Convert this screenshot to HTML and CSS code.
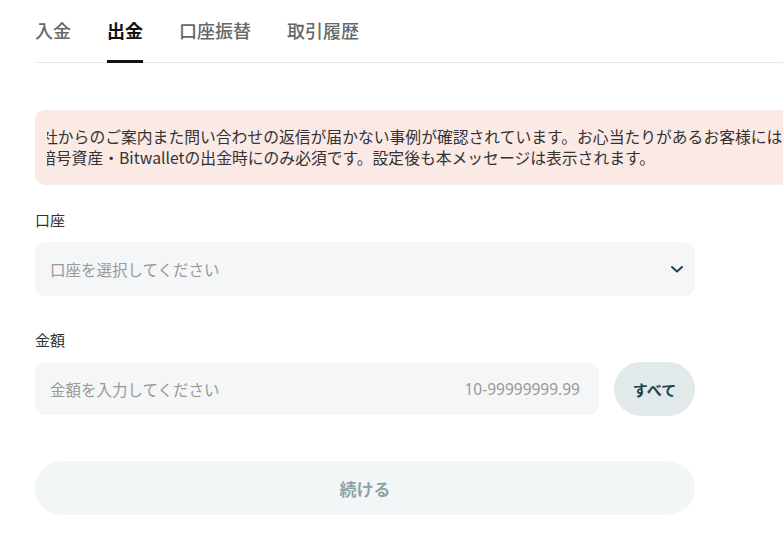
FILE: index.html
```html
<!DOCTYPE html>
<html lang="ja">
<head>
    <meta charset="UTF-8">
    <meta name="viewport" content="width=device-width, initial-scale=1.0">
    <title>出金</title>
    <link rel="stylesheet" href="styles.css">
</head>
<body>
    <div class="page">
        <nav class="tabs">
            <a class="tab">入金</a>
            <a class="tab active">出金</a>
            <a class="tab">口座振替</a>
            <a class="tab">取引履歴</a>
        </nav>

        <div class="notice">
            <div class="notice-track">
                <p class="line-1">社からのご案内また問い合わせの返信が届かない事例が確認されています。お心当たりがあるお客様には</p>
                <p class="line-2">暗号資産・Bitwalletの出金時にのみ必須です。設定後も本メッセージは表示されます。</p>
            </div>
        </div>

        <form class="withdraw-form">
            <div class="field">
                <label class="field-label">口座</label>
                <div class="select">
                    <span class="placeholder">口座を選択してください</span>
                    <svg class="chevron" width="14" height="14" viewBox="0 0 14 14">
                        <path d="M2 5 L7 9.6 L12 5" fill="none" stroke="#1f4650" stroke-width="2" stroke-linecap="round" stroke-linejoin="round"/>
                    </svg>
                </div>
            </div>

            <div class="field">
                <label class="field-label">金額</label>
                <div class="amount-row">
                    <div class="input">
                        <span class="placeholder">金額を入力してください</span>
                        <span class="range">10-99999999.99</span>
                    </div>
                    <button type="button" class="all-btn">すべて</button>
                </div>
            </div>

            <button type="button" class="submit" disabled>続ける</button>
        </form>
    </div>
</body>
</html>
```

FILE: styles.css
```css
body {
    margin: 0;
    background: #ffffff;
    font-family: "Noto Sans CJK JP", "Noto Sans", sans-serif;
    color: #333;
    overflow: hidden;
}
.page {
    padding-left: 35px;
    width: 1100px;
}
.tabs {
    display: flex;
    gap: 36px;
    border-bottom: 1px solid #e8e8e8;
    padding-top: 17px;
}
.tab {
    font-size: 18px;
    line-height: 26px;
    padding-bottom: 17px;
    color: #666;
    font-weight: 500;
    cursor: pointer;
    border-bottom: 3px solid transparent;
    margin-bottom: -1px;
}
.tab.active {
    color: #111;
    font-weight: 700;
    border-bottom-color: #111;
}
.notice {
    width: 760px;
    margin-top: 47px;
    background: #fbe9e5;
    border-radius: 10px 0 0 10px;
    padding: 16px 0 17px 12px;
}
.notice-track {
    overflow: hidden;
}
.notice-track p {
    margin: 0;
    font-size: 15.8px;
    line-height: 21px;
    color: #333;
    white-space: nowrap;
}
/* the ticker is mid-scroll, so the first glyphs are partly hidden */
.notice-track .line-1 {
    margin-left: -5px;
}
.notice-track .line-2 {
    margin-left: -7px;
}
.withdraw-form {
    width: 660px;
    padding-top: 24px;
}
.field {
    margin-bottom: 33px;
}
.field-label {
    display: block;
    font-size: 15px;
    line-height: 22px;
    color: #333;
    margin-bottom: 11px;
}
.select,
.input {
    display: flex;
    align-items: center;
    justify-content: space-between;
    height: 54px;
    padding: 0 15px;
    background: #f4f6f7;
    border-radius: 10px;
    box-sizing: border-box;
}
.select {
    padding-right: 11px;
}
.input {
    height: 52px;
    flex: 1;
    padding-right: 19px;
}
.placeholder {
    font-size: 15.5px;
    color: #999;
}
.range {
    font-size: 15.5px;
    color: #999;
    font-family: "Noto Sans", sans-serif;
}
.amount-row {
    display: flex;
    align-items: center;
    gap: 15px;
}
.all-btn {
    width: 81px;
    height: 54px;
    border: none;
    border-radius: 27px;
    background: #e1e9ea;
    color: #1c444c;
    font-family: inherit;
    font-size: 15px;
    font-weight: 700;
    cursor: pointer;
}
.submit {
    display: block;
    width: 100%;
    height: 54px;
    margin-top: 45px;
    border: none;
    border-radius: 27px;
    background: #f3f6f7;
    color: #8fa4a8;
    font-family: inherit;
    font-size: 17px;
    font-weight: 700;
}
```
